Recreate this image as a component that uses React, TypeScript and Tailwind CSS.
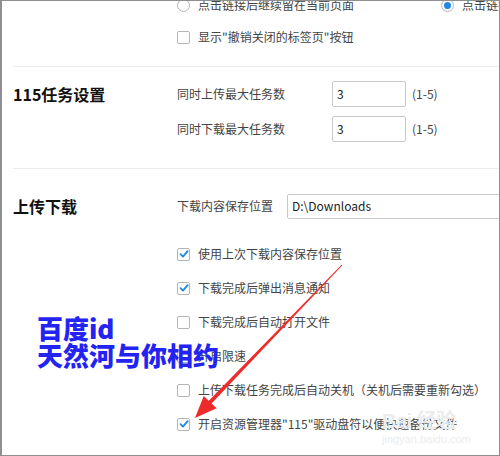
import React from "react";

const font = { fontFamily: '"Noto Sans CJK SC", "Noto Sans", sans-serif' };

function Check({ checked }: { checked?: boolean }) {
  return (
    <span className="w-[13px] h-[13px] shrink-0 rounded-[2px] border border-[#b4b4b4] bg-white flex items-center justify-center">
      {checked && (
        <svg width="10" height="10" viewBox="0 0 10 10">
          <path d="M1.5 5.2 L4 7.6 L8.6 2.2" fill="none" stroke="#1e88e5" strokeWidth="1.8" strokeLinecap="round" strokeLinejoin="round" />
        </svg>
      )}
    </span>
  );
}

function Radio({ checked }: { checked?: boolean }) {
  return (
    <span className="w-[13px] h-[13px] shrink-0 rounded-full border border-[#b4b4b4] bg-white flex items-center justify-center">
      {checked && <span className="w-[7px] h-[7px] rounded-full bg-[#1e88e5]" />}
    </span>
  );
}

function CheckRow({ checked, text }: { checked?: boolean; text: string }) {
  return (
    <div className="h-[34px] flex items-center gap-[8px]">
      <Check checked={checked} />
      <span className="whitespace-nowrap">{text}</span>
    </div>
  );
}

export default function App() {
  return (
    <div
      className="w-[500px] h-[456px] overflow-hidden relative bg-white border-l-2 border-t border-r border-b border-[#8f8f8f] text-[12px] text-[#444]"
      style={font}
    >
      <div className="pl-[11px]">
        {/* section 1 (cut off) */}
        <div className="-mt-[12px] pb-[13px] flex">
          <div className="w-[164px] shrink-0" />
          <div className="flex-1">
            <div className="h-[32px] flex items-center">
              <div className="w-[264px] flex items-center gap-[8px] shrink-0">
                <Radio />
                <span className="whitespace-nowrap">点击链接后继续留在当前页面</span>
              </div>
              <div className="flex items-center gap-[8px]">
                <Radio checked />
                <span className="whitespace-nowrap">点击链接后打开新页面</span>
              </div>
            </div>
            <div className="h-[32px] flex items-center gap-[8px]">
              <Check />
              <span className="whitespace-nowrap">显示"撤销关闭的标签页"按钮</span>
            </div>
          </div>
        </div>
        <div className="h-px bg-[#ececec]" />

        {/* section 2 */}
        <div className="pt-[14px] pb-[26px] flex">
          <div className="w-[164px] shrink-0 text-[16px] font-bold leading-[26px] text-[#111]">115任务设置</div>
          <div className="flex-1 flex flex-col gap-[9px]">
            <div className="h-[26px] flex items-center">
              <span className="w-[155px] whitespace-nowrap">同时上传最大任务数</span>
              <div className="w-[74px] h-[26px] border border-[#c9c9c9] rounded-[2px] flex items-center pl-[4px] text-[#222]">3</div>
              <span className="ml-[6px]">(1-5)</span>
            </div>
            <div className="h-[26px] flex items-center">
              <span className="w-[155px] whitespace-nowrap">同时下载最大任务数</span>
              <div className="w-[74px] h-[26px] border border-[#c9c9c9] rounded-[2px] flex items-center pl-[4px] text-[#222]">3</div>
              <span className="ml-[6px]">(1-5)</span>
            </div>
          </div>
        </div>
        <div className="h-px bg-[#ececec]" />

        {/* section 3 */}
        <div className="pt-[25px] flex">
          <div className="w-[164px] shrink-0 text-[16px] font-bold leading-[24px] text-[#111]">上传下载</div>
          <div className="flex-1">
            <div className="h-[24px] flex items-center">
              <span className="w-[110px] whitespace-nowrap">下载内容保存位置</span>
              <div className="w-[260px] h-[25px] shrink-0 border border-[#c9c9c9] rounded-[2px] flex items-center pl-[4px] text-[#222]">D:\Downloads</div>
            </div>
            <div className="mt-[19px]">
              <CheckRow checked text="使用上次下载内容保存位置" />
              <CheckRow checked text="下载完成后弹出消息通知" />
              <CheckRow text="下载完成后自动打开文件" />
              <CheckRow text="开启限速" />
              <CheckRow text="上传下载任务完成后自动关机（关机后需要重新勾选）" />
              <CheckRow checked text={'开启资源管理器"115"驱动盘符以便快速备份文件'} />
            </div>
          </div>
        </div>
      </div>

      {/* watermark */}
      <div className="absolute left-[380px] top-[410px] text-[#ececec] leading-none pointer-events-none">
        <div className="text-[20px] font-bold tracking-tight" style={{ fontFamily: '"Liberation Sans", "Noto Sans CJK SC", sans-serif' }}>Bai 经验</div>
        <div className="text-[11px] mt-[3px]" style={{ fontFamily: '"Liberation Sans", sans-serif' }}>jingyan.baidu.com</div>
      </div>

      {/* blue overlay text */}
      <div className="absolute left-[35px] top-[313px] text-[26px] font-black leading-[27px] text-[#2424f2] pointer-events-none whitespace-nowrap">
        <div>百度id</div>
        <div>天然河与你相约</div>
      </div>

      {/* red arrow */}
      <svg className="absolute left-0 top-0 pointer-events-none" width="500" height="456" viewBox="0 0 500 456">
        <polygon
          points="340.4,264.3 339.6,263.7 206.8,399.7 201.7,394.9 193,417 214.7,407.3 209.6,402.5"
          fill="#ee2b2b"
        />
      </svg>
    </div>
  );
}
